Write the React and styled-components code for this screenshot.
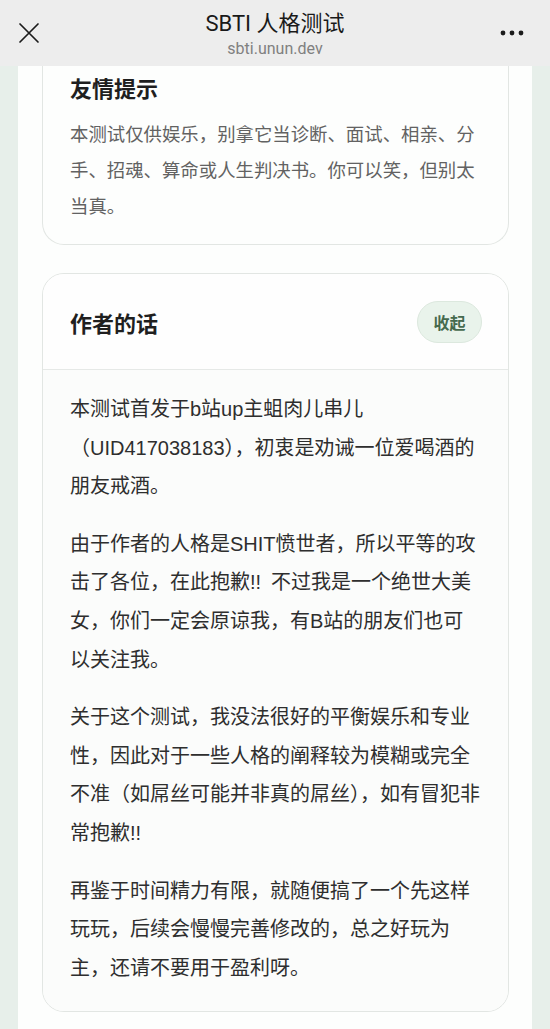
import React from 'react';
import styled, { createGlobalStyle } from 'styled-components';

const GlobalStyle = createGlobalStyle`
  html, body { margin: 0; padding: 0; }
  body {
    background: #e7efea;
    font-family: "Noto Sans CJK SC", "Noto Sans", Roboto, sans-serif;
    -webkit-font-smoothing: antialiased;
  }
`;

const Screen = styled.div`
  width: 550px;
  height: 1029px;
  display: flex;
  flex-direction: column;
  overflow: hidden;
  background: #e7efea;
`;

const NavBar = styled.header`
  flex: 0 0 66px;
  display: grid;
  grid-template-columns: 60px 1fr 60px;
  align-items: center;
  background: #ededed;
`;

const NavButton = styled.div`
  display: flex;
  align-items: center;
  justify-content: ${p => (p.$right ? 'flex-end' : 'flex-start')};
  padding: ${p => (p.$right ? '0 26px 0 0' : '0 0 0 18px')};
  color: #1b1b1b;
`;

const NavTitle = styled.div`
  display: flex;
  flex-direction: column;
  align-items: center;
  padding-top: 6px;
`;

const TitleText = styled.div`
  font-size: 22px;
  line-height: 26px;
  color: #191919;
  font-family: Roboto, "Noto Sans CJK SC", sans-serif;
`;

const UrlText = styled.div`
  font-size: 16px;
  line-height: 24px;
  color: #808080;
  font-family: Roboto, sans-serif;
`;

const Viewport = styled.main`
  flex: 1;
  display: flex;
  padding: 0 18px;
  min-height: 0;
`;

const Panel = styled.div`
  flex: 1;
  background: #fdfefd;
  padding: 0 23px 0 24px;
  display: flex;
  flex-direction: column;
  gap: 28px;
`;

const Card = styled.section`
  background: #fdfefd;
  border: 1px solid #e2e6e3;
  border-radius: 22px;
  ${p => p.$clipped && `
    border-top: none;
    border-top-left-radius: 0;
    border-top-right-radius: 0;
  `}
  overflow: hidden;
`;

const TipBody = styled.div`
  padding: 3px 27px 21px;
`;

const CardTitle = styled.h2`
  margin: 0;
  font-size: 22px;
  line-height: 36px;
  font-weight: 700;
  color: #1f1f1f;
`;

const TipText = styled.p`
  margin: 10px 0 0;
  font-size: 18.4px;
  line-height: 36px;
  color: #626262;
`;

const CardHeader = styled.div`
  height: 95px;
  display: flex;
  align-items: center;
  justify-content: space-between;
  padding: 0 26px 0 27px;
  border-bottom: 1px solid #e6e9e7;
  background: #fefefe;
`;

const PillButton = styled.button`
  width: 65px;
  height: 42px;
  border-radius: 21px;
  border: 1px solid #dce8de;
  background: #e9f3eb;
  color: #466a4e;
  font-family: inherit;
  font-size: 16px;
  font-weight: 700;
  padding: 0;
`;

const NoteBody = styled.div`
  padding: 20px 27px 24px;
  background: #fbfcfb;
  display: flex;
  flex-direction: column;
  gap: 19px;
`;

const Paragraph = styled.p`
  margin: 0;
  font-family: "Liberation Sans", "Noto Sans CJK SC", sans-serif;
  font-size: 20px;
  line-height: 38.6px;
  color: #2e2e2e;
`;

const CloseIcon = () => (
  <svg width="22" height="22" viewBox="0 0 22 22" fill="none" stroke="#1b1b1b" strokeWidth="1.7" strokeLinecap="round">
    <path d="M2 2 L20 20 M20 2 L2 20" />
  </svg>
);

const MoreIcon = () => (
  <svg width="24" height="6" viewBox="0 0 24 6" fill="#1b1b1b">
    <circle cx="3" cy="3" r="2.4" />
    <circle cx="12" cy="3" r="2.4" />
    <circle cx="21" cy="3" r="2.4" />
  </svg>
);

const paragraphs = [
  '本测试首发于b站up主蛆肉儿串儿（UID417038183），初衷是劝诫一位爱喝酒的朋友戒酒。',
  '由于作者的人格是SHIT愤世者，所以平等的攻击了各位，在此抱歉!!\u2002不过我是一个绝世大美女，你们一定会原谅我，有B站的朋友们也可以关注我。',
  '关于这个测试，我没法很好的平衡娱乐和专业性，因此对于一些人格的阐释较为模糊或完全不准（如屌丝可能并非真的屌丝），如有冒犯非常抱歉!!',
  '再鉴于时间精力有限，就随便搞了一个先这样玩玩，后续会慢慢完善修改的，总之好玩为主，还请不要用于盈利呀。',
];

export default function App() {
  return (
    <Screen>
      <GlobalStyle />
      <NavBar>
        <NavButton>
          <CloseIcon />
        </NavButton>
        <NavTitle>
          <TitleText>SBTI 人格测试</TitleText>
          <UrlText>sbti.unun.dev</UrlText>
        </NavTitle>
        <NavButton $right>
          <MoreIcon />
        </NavButton>
      </NavBar>
      <Viewport>
        <Panel>
          <Card $clipped>
            <TipBody>
              <CardTitle>友情提示</CardTitle>
              <TipText>
                本测试仅供娱乐，别拿它当诊断、面试、相亲、分手、招魂、算命或人生判决书。你可以笑，但别太当真。
              </TipText>
            </TipBody>
          </Card>
          <Card>
            <CardHeader>
              <CardTitle>作者的话</CardTitle>
              <PillButton>收起</PillButton>
            </CardHeader>
            <NoteBody>
              {paragraphs.map(text => (
                <Paragraph key={text.slice(0, 8)}>{text}</Paragraph>
              ))}
            </NoteBody>
          </Card>
        </Panel>
      </Viewport>
    </Screen>
  );
}
